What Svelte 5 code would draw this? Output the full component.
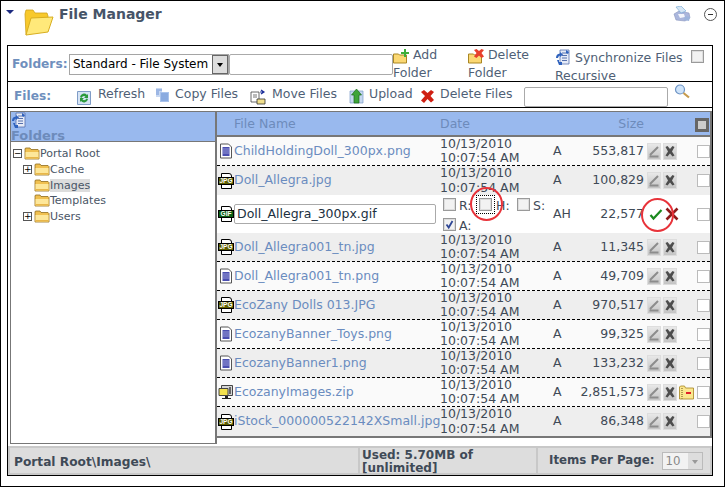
<script>
  const files = [
    { name: "ChildHoldingDoll_300px.png", type: "doc", attr: "A", size: "553,817" },
    { name: "Doll_Allegra.jpg", type: "jpg", attr: "A", size: "100,829", flush: true },
    { name: "Doll_Allegra_300px.gif", type: "gif", attr: "AH", size: "22,577", edit: true },
    { name: "Doll_Allegra001_tn.jpg", type: "jpg", attr: "A", size: "11,345" },
    { name: "Doll_Allegra001_tn.png", type: "doc", attr: "A", size: "49,709" },
    { name: "EcoZany Dolls 013.JPG", type: "jpg", attr: "A", size: "970,517" },
    { name: "EcozanyBanner_Toys.png", type: "doc", attr: "A", size: "99,325" },
    { name: "EcozanyBanner1.png", type: "doc", attr: "A", size: "133,232" },
    { name: "EcozanyImages.zip", type: "zip", attr: "A", size: "2,851,573", unzip: true },
    { name: "iStock_000000522142XSmall.jpg", type: "jpg", attr: "A", size: "86,348", flush: true }
  ];
  const tree = [
    { name: "Cache", plus: true },
    { name: "Images", selected: true },
    { name: "Templates" },
    { name: "Users", plus: true }
  ];
</script>

{#snippet folder()}
  <svg width="16" height="13" viewBox="0 0 16 13" class="ico">
    <path d="M1 3.500V1.500L2 1h4l1 1.500h7l1 1V12H1z" fill="#f0c050" stroke="#8f6c1e" stroke-width=".8" />
    <path d="M1.500 5h13v6.500h-13z" fill="#fde79a" />
    <path d="M1.500 10h13v1.500h-13z" fill="#e8b64a" />
  </svg>
{/snippet}

{#snippet syncIcon()}
  <svg width="16" height="17" viewBox="0 0 16 17" class="ico">
    <path d="M5 1h9v14H5z" fill="#e6ebf7" stroke="#5670ad" stroke-width=".8" />
    <path d="M7 4h5M7 6.500h5M7 9h5M7 11.500h5" stroke="#5670ad" />
    <path d="M1 9a4.500 4.500 0 0 1 4-4.500V3l3 2.500L5 8V6.500A3 3 0 0 0 3 9zM2 11h2v2h3v3H4z" fill="#2f62bd" />
    <path d="M11 1l3 2-1 2-2-1z" fill="#2f62bd" />
  </svg>
{/snippet}

{#snippet fileIcon(type)}
  {#if type === "doc"}
    <svg width="14" height="16" viewBox="0 0 14 16" class="ico doc">
      <path d="M1.500 1h8l3 3v11h-11z" fill="#fff" stroke="#555" />
      <path d="M3.500 4h7v9h-7z" fill="#4a4eb0" />
      <path d="M3.500 6h7M3.500 8h7M3.500 10h7" stroke="#b9bce6" stroke-width=".7" />
    </svg>
  {:else if type === "zip"}
    <svg width="16" height="16" viewBox="0 0 16 16" class="ico">
      <path d="M3.500 1.500h11v10h-11z" fill="#d6d6d6" stroke="#444" />
      <path d="M1 4.500h9v7H1z" fill="#f3e14e" stroke="#444" />
      <path d="M11 3h2v7h-2z" fill="#666" />
      <path d="M7 12h3v2h3v1H4v-1h3z" fill="#222" />
    </svg>
  {:else}
    <span class="badge-ico">
      <i class="sheet"></i>
      <b class:gif={type === "gif"}>{type.toUpperCase()}</b>
    </span>
  {/if}
{/snippet}

<div class="page">
  <span class="collapse"></span>
  <header class="title">
    <svg width="30" height="28" viewBox="0 0 30 28">
      <path d="M2 27 1 6l1-4h7l2 3h12l1 3v3z" fill="#f8c92c" stroke="#cfa21a" stroke-width=".8" />
      <path d="M2 27 7 10l22-1-5 15z" fill="#ffe97a" stroke="#d8ae20" />
    </svg>
    <h1>File Manager</h1>
    <span class="spacer"></span>
    <svg width="18" height="16" viewBox="0 0 18 16">
      <path d="M1 8l5-3 10 2 1 5-5 3-9-1z" fill="#aab6dc" stroke="#8a96bd" stroke-width=".6" />
      <path d="M3 1l5-1 5 5-5 2z" fill="#d5e6f5" stroke="#6fa4d4" stroke-width=".6" />
      <path d="M5 8l6 0 1 3-5 1z" fill="#f3f5fb" />
      <path d="M12 10l5 1-1 4-5-1z" fill="#9db4dc" />
    </svg>
    <span class="minus"></span>
  </header>

  <section class="manager">
    <div class="bar folders">
      <span class="label">Folders:</span>
      <span class="select">Standard - File System<i class="drop"></i></span>
      <span class="textbox path"></span>
      <span class="tool add">
        <svg width="16" height="15" viewBox="0 0 16 15" class="ico">
          <path d="M.5 14V5h5l1 1h7v8z" fill="#fbd873" stroke="#a98725" />
          <path d="M8 3h3V0h2v3h3v2h-3v3h-2V5H8z" fill="#3fae3a" />
        </svg> Add Folder
      </span>
      <span class="tool del">
        <svg width="16" height="15" viewBox="0 0 16 15" class="ico">
          <path d="M.5 14V5h5l1 1h7v8z" fill="#fbd873" stroke="#a98725" />
          <path d="M6 1l2.500-1L11 2l2.500-2L16 1l-2.500 3L16 7.500 13.500 9 11 6.500 8.500 9 6 7.500 8.500 4z" fill="#e8402c" />
        </svg> Delete Folder
      </span>
      <span class="tool sync">
        {@render syncIcon()} Synchronize Files Recursive
      </span>
      <i class="check big"></i>
    </div>

    <div class="bar filesbar">
      <span class="label">Files:</span>
      <span class="tool refresh">
        <svg width="14" height="15" viewBox="0 0 14 15" class="ico">
          <path d="M.5 1.500h13v13H.5z" fill="#d6e4f5" stroke="#7f9cc6" />
          <path d="M3 7a4 4 0 0 1 7-2l1-1v4H7l1.500-1.500A2.500 2.500 0 0 0 4.500 8zM11 9a4 4 0 0 1-7 2l-1 1V8h4l-1.500 1.500a2.500 2.500 0 0 0 4-1z" fill="#2b9a3c" />
        </svg><span>Refresh</span>
      </span>
      <span class="tool copy">
        <svg width="15" height="16" viewBox="0 0 15 16" class="ico">
          <path d="M1 1h6v9H1z" fill="#c8d8f2" />
          <path d="M5 5h9v10H5z" fill="#a9c3ec" />
          <path d="M1 3h6M1 5h3M1 7h3M6 7h7M6 9h7M6 11h7M6 13h7" stroke="#5b86cf" stroke-width=".8" />
        </svg><span>Copy Files</span>
      </span>
      <span class="tool move">
        <svg width="16" height="16" viewBox="0 0 16 16" class="ico">
          <path d="M1 3h8v10H1z" fill="#fff" stroke="#444" stroke-width=".8" />
          <path d="M3 6h4M3 8h4" stroke="#777" />
          <path d="M7 10h8v5H7z" fill="#f1df8c" stroke="#333" stroke-width=".8" />
          <path d="M10 3h3M11 1l3 2-3 2" fill="none" stroke="#1c2f9a" stroke-width="1.200" />
        </svg><span>Move Files</span>
      </span>
      <span class="tool upload">
        <svg width="15" height="16" viewBox="0 0 15 16" class="ico">
          <path d="M1 3h13v12H1z" fill="#c5d8f0" stroke="#7d9cc8" stroke-width=".7" />
          <path d="M7.500 1l5 6H10v8H5V7H2.500z" fill="#3ea43a" stroke="#1d6b1d" stroke-width=".7" />
        </svg><span>Upload</span>
      </span>
      <span class="tool remove">
        <svg width="15" height="14" viewBox="0 0 15 14" class="ico">
          <path d="M1 3l3-2 3.500 3L11 1l3 2-3.500 4L14 11l-3 2.500L7.500 10 4 14l-3-2.500L5 7z" fill="#cf1f12" />
        </svg><span>Delete Files</span>
      </span>
      <span class="textbox search"></span>
      <svg class="glass" width="17" height="15" viewBox="0 0 17 15">
        <circle cx="6" cy="5.500" r="4.500" fill="#cfe4fa" stroke="#6d93c4" stroke-width="1.200" />
        <path d="M9.500 9l5.500 4.500" stroke="#c69a4c" stroke-width="2.200" />
      </svg>
    </div>

    <div class="browser">
      <aside class="tree">
        <div class="tree-head">
          {@render syncIcon()}
          <strong>Folders</strong>
        </div>
        <ul>
          <li class="root"><i class="exp">−</i>{@render folder()}<span>Portal Root</span></li>
          {#each tree as node}
            <li class="node">
              {#if node.plus}<i class="exp">+</i>{:else}<i class="exp none"></i>{/if}
              {@render folder()}<span class:sel={node.selected}>{node.name}</span>
            </li>
          {/each}
        </ul>
      </aside>

      <div class="list">
        <div class="row head">
          <span class="name">File Name</span>
          <span class="date">Date</span>
          <span class="attr"></span>
          <span class="size">Size</span>
          <span class="acts"></span>
          <span class="selcol"><i class="checkall"></i></span>
        </div>
        {#each files as f, i}
          <div class="row" class:alt={i % 2 === 1 && !f.edit} class:editing={f.edit} class:flush={f.flush}>
            <span class="name">
              {@render fileIcon(f.type)}
              {#if f.edit}
                <span class="textbox rename">{f.name}</span>
              {:else}
                <span class="link">{f.name}</span>
              {/if}
            </span>
            {#if f.edit}
              <span class="date flags">
                <span class="flag"><i class="check"></i>R:</span>
                <span class="flag h"><i class="check focus"></i>H:</span>
                <span class="flag"><i class="check"></i>S:</span>
                <span class="flag"><i class="check on"><svg width="11" height="11" viewBox="0 0 11 11"><path d="M2.500 5.500l2.200 3L8.500 2" fill="none" stroke="#2f4795" stroke-width="1.800" /></svg></i>A:</span>
              </span>
            {:else}
              <span class="date">10/13/2010<br />10:07:54 AM</span>
            {/if}
            <span class="attr">{f.attr}</span>
            <span class="size">{f.size}</span>
            <span class="acts">
              {#if f.edit}
                <svg width="18" height="14" viewBox="0 0 18 14">
                  <path d="M3.500 8l3 3.500L14.500 3" fill="none" stroke="#1b8a1e" stroke-width="2.200" />
                </svg>
                <svg class="no" width="14" height="14" viewBox="0 0 14 14">
                  <path d="M1.500 1.500l11 11M12.500 1.500l-11 11" stroke="#8e1a1a" stroke-width="2.600" />
                </svg>
              {:else}
                <i class="btn"><svg width="14" height="17" viewBox="0 0 14 17"><path d="M3 12 11 4M2.500 13.500h9" stroke="#8c8c8c" stroke-width="2" /></svg></i>
                <i class="btn"><svg width="14" height="17" viewBox="0 0 14 17"><path d="M2.500 4l2-1 2.500 3 2.500-3 2 1L9 8.500l2.500 4-2 1L7 10.500l-2.500 3-2-1L5 8.500z" fill="#4d4d4d" /></svg></i>
                {#if f.unzip}
                  <svg class="unz" width="16" height="15" viewBox="0 0 16 15">
                    <path d="M.5 14V2l1-1h4l1 2h8v11z" fill="#fbe78f" stroke="#a58420" stroke-width=".8" />
                    <path d="M3 3v11" stroke="#b09a50" stroke-width="2" stroke-dasharray="1 1" />
                    <path d="M7 8h5" stroke="#e0202a" stroke-width="2" />
                  </svg>
                {/if}
              {/if}
            </span>
            <span class="selcol"><i class="check wide"></i></span>
          </div>
        {/each}
      </div>
    </div>

    <footer class="status">
      <strong class="where">Portal Root\Images\</strong>
      <strong class="used">Used: 5.70MB of [unlimited]</strong>
      <strong class="perpage">Items Per Page:<span class="pager">10<i></i></span></strong>
    </footer>
  </section>

  <span class="ring one"></span>
  <span class="ring two"></span>
</div>

<style>
  :global(body) {
    margin: 0;
    font-family: "DejaVu Sans", Verdana, sans-serif;
    background: #fff;
  }

  .page {
    position: relative;
    box-sizing: border-box;
    width: 725px;
    height: 487px;
    border: 1px solid #000;
    padding: 0 11px 0 6px;
    font-size: 12.500px;
    color: #3f4a57;
    overflow: hidden;
  }

  i { font-style: normal; display: inline-block; }
  .ico { flex: none; vertical-align: top; }

  .collapse {
    position: absolute;
    left: 5px;
    top: 9px;
    border: 4px solid transparent;
    border-top: 4px solid #1c2a80;
  }

  .title {
    display: flex;
    align-items: flex-start;
    height: 44px;
    padding-left: 17px;
    box-sizing: border-box;
  }
  .title > svg:first-child { margin-top: 7px; }
  .title h1 {
    margin: 4px 0 0 5px;
    font-size: 14px;
    line-height: 18px;
    color: #465468;
  }
  .spacer { flex: 1; }
  .title svg:nth-of-type(2) { margin: 5px 13px 0 0; }
  .minus {
    width: 11px;
    height: 11px;
    margin: 7px -4px 0 0;
    border: 1px solid #555;
    border-radius: 50%;
    position: relative;
  }
  .minus::after {
    content: "";
    position: absolute;
    left: 3px;
    top: 5px;
    width: 5px;
    height: 1px;
    background: #333;
  }

  .manager {
    width: 706px;
    height: 431px;
    box-sizing: border-box;
    border: 1px solid #000;
    display: flex;
    flex-direction: column;
  }

  .bar {
    display: flex;
    box-sizing: border-box;
    border-bottom: 1px solid #000;
    position: relative;
  }
  .folders { height: 36px; padding: 8px 0 0 4px; line-height: 18px; }
  .filesbar { height: 26px; padding: 3px 0 0 6px; align-items: flex-start; }

  .label {
    font-weight: bold;
    font-size: 12.200px;
    color: #6f8fbd;
    line-height: 20px;
  }
  .folders .label { width: 57px; }
  .filesbar .label { width: 63px; margin-top: 1px; }

  .textbox {
    display: block;
    box-sizing: border-box;
    border: 1px solid #aaa;
    border-radius: 2px;
    background: #fff;
  }

  .select {
    box-sizing: border-box;
    width: 160px;
    height: 21px;
    border: 1px solid #a5a5a5;
    padding-left: 3px;
    font-size: 12px;
    line-height: 19px;
    color: #000;
    white-space: nowrap;
    position: relative;
  }
  .drop {
    position: absolute;
    right: 0;
    top: 0;
    width: 16px;
    height: 19px;
    box-sizing: border-box;
    background: #ddd;
    border: 1px solid #666;
  }
  .drop::after {
    content: "";
    position: absolute;
    left: 4px;
    top: 7px;
    border: 3px solid transparent;
    border-top: 4px solid #000;
  }
  .path { width: 164px; height: 21px; }

  .tool { color: #4f5f76; display: block; }
  .folders .add { width: 75px; margin-top: -8px; }
  .folders .del { width: 87px; margin-top: -8px; }
  .folders .add svg, .folders .del svg { margin-top: 3px; }
  .folders .sync { width: 136px; margin-top: -5px; }
  .big { width: 13px; height: 13px; margin-top: -4px; }

  .filesbar .tool { display: flex; gap: 5px; line-height: 17px; }
  .refresh { width: 78px; gap: 7px !important; }
  .refresh svg { margin-top: 5px; }
  .copy { width: 95px; }
  .copy svg { margin-top: 2px; }
  .move { width: 99px; gap: 6px !important; }
  .move svg { margin-top: 4px; }
  .upload { width: 71px; }
  .upload svg { margin-top: 3px; }
  .remove { width: 104px; }
  .remove svg { margin-top: 4px; }
  .search { width: 144px; height: 20px; margin-top: 2px; }
  .glass { margin-left: 6px; margin-top: -1px; }

  .browser {
    display: flex;
    margin: 3px 0 0 2px;
    flex: 1;
    min-height: 0;
  }
  .tree {
    box-sizing: border-box;
    width: 207px;
    height: 333px;
    border: 1px solid #777;
    border-top: 0;
    border-right-width: 2px;
  }
  .tree-head {
    box-sizing: border-box;
    height: 31px;
    border-top: 1px solid #777;
    border-bottom: 1px solid #777;
    background: #99b9ee;
    color: #6d8bbb;
    line-height: 13px;
    font-size: 13px;
    overflow: hidden;
  }
  .tree-head svg { display: block; }
  .tree ul { list-style: none; margin: 0; padding: 4px 0 0 2px; }
  .tree li {
    display: flex;
    align-items: center;
    height: 15.700px;
    font-size: 11px;
    color: #4a5666;
  }
  .tree .node { padding-left: 10px; }
  .exp {
    width: 7px;
    height: 7px;
    border: 1px solid #555;
    margin-right: 2px;
    font-size: 9px;
    line-height: 7px;
    text-align: center;
    color: #000;
  }
  .exp.none { border-color: transparent; }
  .sel { background: #ddd; }

  .list {
    width: 495px;
    height: 327px;
    border: 1px solid #777;
    border-width: 1px 2px 2px 0;
    box-sizing: border-box;
  }
  .row {
    display: flex;
    height: 29px;
    box-sizing: border-box;
    border-bottom: 1px dashed #000;
    align-items: center;
    line-height: 14.500px;
    white-space: nowrap;
    background: #fafafa;
    color: #3f4a57;
  }
  .row.alt { background: #eee; }
  .row.flush { border-bottom: 0; }
  .row.editing { background: #fff; height: 38px; border-bottom: 0; }
  .row.head {
    height: 25px;
    padding-top: 2px;
    background: #99b9ee;
    border-bottom: 2px solid #777;
    color: #6d8bbb;
  }
  .head .name { padding-left: 17px; }
  .name {
    width: 223px;
    box-sizing: border-box;
    padding-left: 1px;
    display: flex;
    align-items: center;
    flex: none;
  }
  .doc { margin: 0 1px; }
  .link { color: #6a8cbf; }
  .date { width: 113px; flex: none; }
  .flags {
    display: flex;
    flex-wrap: wrap;
    align-items: center;
    padding: 3px 0 0 3px;
    box-sizing: border-box;
    line-height: 20px;
  }
  .flag { width: 36px; display: block; white-space: nowrap; }
  .flag.h { width: 38px; }
  .flag .check { margin-right: 3px; vertical-align: -1px; }
  .flag .focus { margin-right: 4px; }
  .on svg { display: block; }
  .attr { width: 21px; flex: none; }
  .size { width: 70px; text-align: right; flex: none; }
  .acts {
    width: 53px;
    flex: none;
    display: flex;
    gap: 2px;
    align-items: center;
    position: relative;
    padding-left: 3px;
    box-sizing: border-box;
  }
  .no { margin-left: -2px; }
  .selcol { flex: 1; display: flex; }
  .checkall {
    width: 14px;
    height: 14px;
    margin-left: -2px;
    background: #ccc;
    border: 3px solid #666;
    box-sizing: border-box;
  }
  .btn {
    width: 14px;
    height: 17px;
    background: linear-gradient(#e8e8e8, #c4c4c4);
    border: 1px solid #ddd;
    box-sizing: border-box;
    overflow: hidden;
  }
  .btn svg { display: block; margin: -1px 0 0 -1px; }
  .unz { position: absolute; left: 35px; }

  .check {
    width: 13px;
    height: 13px;
    box-sizing: border-box;
    border: 1px solid #9a9a9a;
    background: #f2f2f2;
    box-shadow: inset 0 0 0 1px #ddd;
    vertical-align: -2px;
  }
  .check.wide { border-color: #bbb; background: #fff; box-shadow: none; }
  .check.focus { outline: 1px dotted #000; outline-offset: 2px; }

  .badge-ico {
    position: relative;
    width: 16px;
    height: 16px;
    flex: none;
    display: block;
  }
  .sheet {
    position: absolute;
    left: 3px;
    top: 0;
    width: 11px;
    height: 16px;
    border: 1px solid #000;
    border-top-right-radius: 3px;
    box-sizing: border-box;
    background: #fff;
  }
  .badge-ico b {
    position: absolute;
    left: 0;
    top: 4px;
    width: 16px;
    height: 8px;
    box-sizing: border-box;
    background: #5f5f00;
    border: 1px solid #000;
    color: #fff;
    font: bold 6.500px/6px "Liberation Sans", sans-serif;
    text-align: center;
  }
  .badge-ico b.gif { background: #0a5f14; }

  .rename {
    width: 202px;
    height: 20px;
    line-height: 18px;
    padding-left: 2px;
    color: #203040;
  }

  .status {
    display: flex;
    box-sizing: border-box;
    height: 29px;
    margin-top: 4px;
    border: 2px solid #c8c8c8;
    background: #ddd;
    color: #3f4a57;
    font-size: 12px;
    line-height: 13px;
  }
  .where { width: 350px; padding: 8px 0 0 4px; box-sizing: border-box; border-right: 2px solid #c8c8c8; font-size: 12.200px; }
  .used { width: 178px; padding: 1px 0 0 2px; border-right: 2px solid #c8c8c8; box-sizing: border-box; }
  .perpage { flex: 1; display: flex; align-items: center; gap: 8px; padding-left: 11px; white-space: nowrap; font-size: 11.800px; }
  .pager {
    width: 41px;
    height: 18px;
    background: #f2f2f2;
    border: 1px solid #bbb;
    box-sizing: border-box;
    font-weight: normal;
    color: #888;
    padding-left: 2px;
    line-height: 16px;
    position: relative;
  }
  .pager i {
    position: absolute;
    right: 0;
    top: 0;
    width: 14px;
    height: 16px;
    background: #ddd;
  }
  .pager i::after {
    content: "";
    position: absolute;
    left: 4px;
    top: 7px;
    border: 3px solid transparent;
    border-top: 4px solid #999;
  }

  .ring {
    position: absolute;
    width: 33px;
    height: 34px;
    border: 2px solid #e8333a;
    border-radius: 50%;
    box-sizing: border-box;
    pointer-events: none;
  }
  .one { left: 469px; top: 186px; }
  .two { left: 640px; top: 197px; }
</style>
